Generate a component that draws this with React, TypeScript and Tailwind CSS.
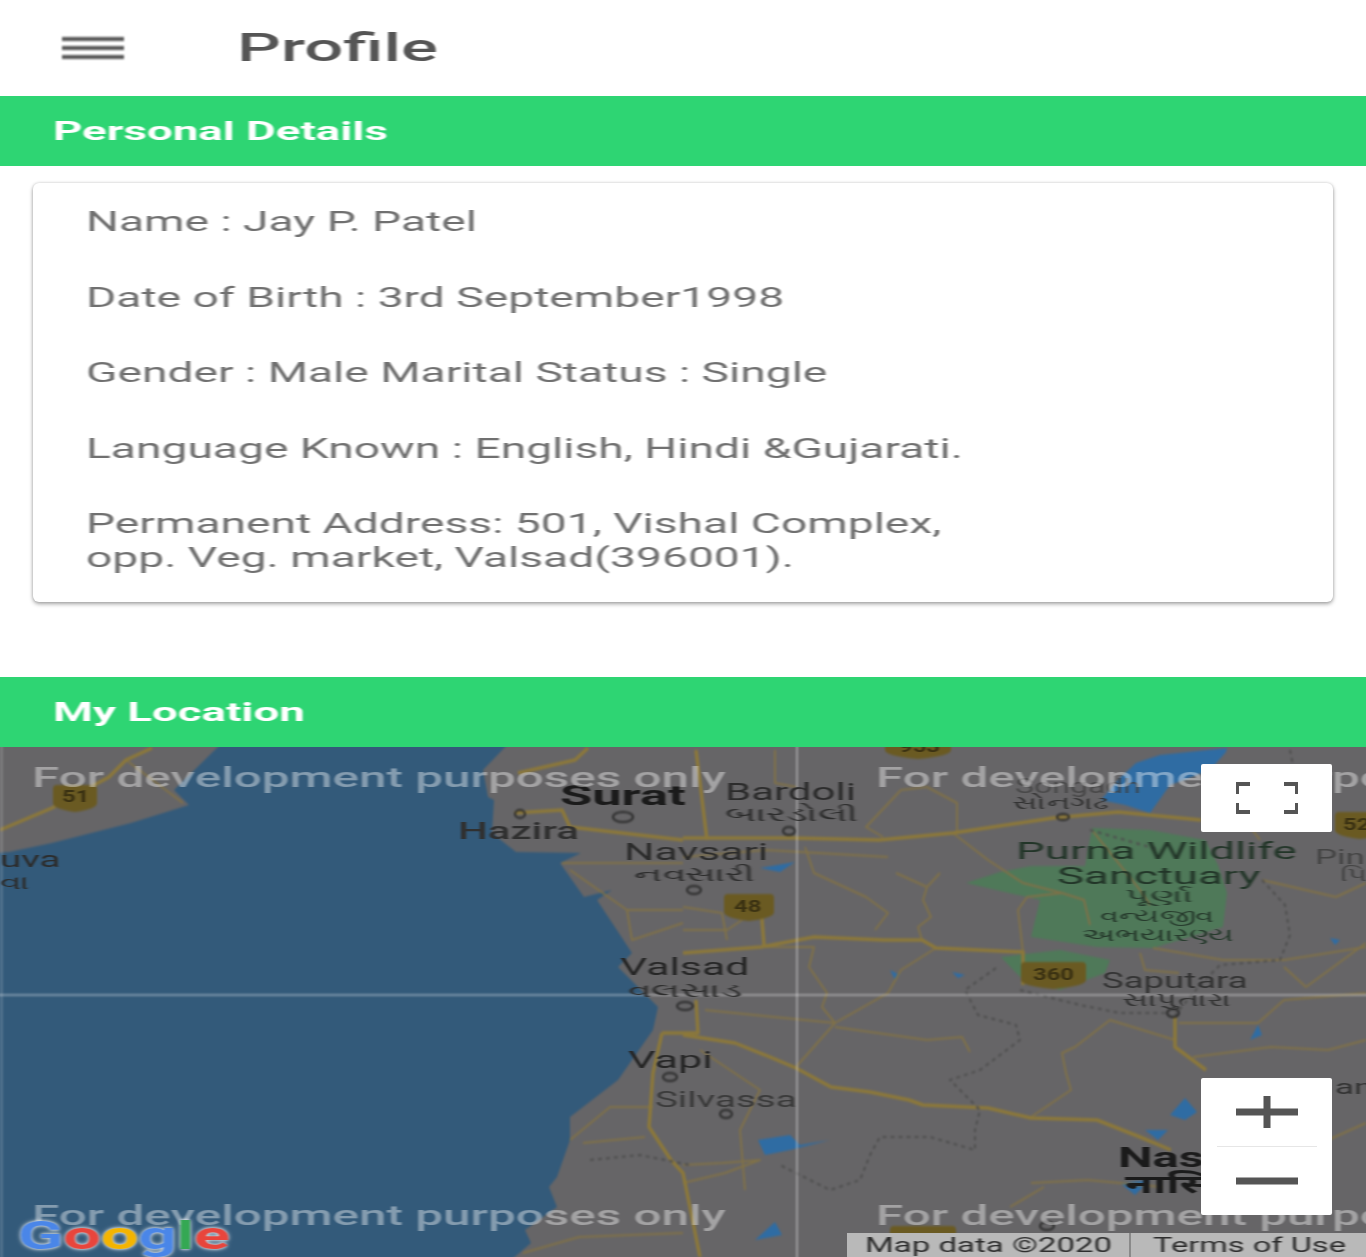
import React from 'react';

const roboto = "font-['Roboto','Noto_Sans',sans-serif]";

const labels: { text: string; className: string }[] = [
  { text: 'Songadh', className: 'left-[1015px] top-[29px] scale-x-[1.6] text-[20px] text-[#3d3d3d]/70' },
  { text: 'Surat', className: 'left-[560px] top-[35px] scale-x-[1.87] text-[28px] font-bold text-[#1b1b1b]' },
  { text: 'Hazira', className: 'left-[458px] top-[72px] scale-x-[1.75] text-[24px] font-medium text-[#303030]' },
  { text: 'Navsari', className: 'left-[624px] top-[93px] scale-x-[1.78] text-[24px] text-[#2c2c2c]' },
  { text: 'નવસારી', className: 'left-[634px] top-[117px] scale-x-[1.9] text-[20px] text-[#2c2c2c]' },
  { text: 'Bardoli', className: 'left-[725px] top-[33px] scale-x-[1.75] text-[24px] text-[#2c2c2c]' },
  { text: 'બારડોલી', className: 'left-[725px] top-[57px] scale-x-[1.97] text-[20px] text-[#2c2c2c]' },
  { text: 'Valsad', className: 'left-[620px] top-[208px] scale-x-[1.78] text-[24px] text-[#262626]' },
  { text: 'વલસાડ', className: 'left-[628px] top-[233px] scale-x-[1.93] text-[20px] text-[#2c2c2c]' },
  { text: 'Vapi', className: 'left-[628px] top-[301px] scale-x-[1.8] text-[24px] text-[#262626]' },
  { text: 'Silvassa', className: 'left-[655px] top-[342px] scale-x-[1.75] text-[22px] text-[#3a3a3a]' },
  { text: 'Purna Wildlife', className: 'left-[1016px] top-[92px] scale-x-[1.9] text-[24px] text-[#223528]' },
  { text: 'Sanctuary', className: 'left-[1057px] top-[117px] scale-x-[1.9] text-[24px] text-[#223528]' },
  { text: 'પૂર્ણા', className: 'left-[1125px] top-[140px] scale-x-[2.1] text-[18px] text-[#263a2c]' },
  { text: 'વન્યજીવ', className: 'left-[1100px] top-[160px] scale-x-[1.7] text-[18px] text-[#263a2c]' },
  { text: 'અભયારણ્ય', className: 'left-[1082px] top-[179px] scale-x-[1.75] text-[18px] text-[#263a2c]' },
  { text: 'Saputara', className: 'left-[1102px] top-[223px] scale-x-[1.66] text-[22px] text-[#333333]' },
  { text: 'સાપુતારા', className: 'left-[1122px] top-[244px] scale-x-[1.8] text-[18px] text-[#333333]' },
  { text: 'Nas', className: 'left-[1118px] top-[397px] scale-x-[1.75] text-[28px] font-bold text-[#1b1b1b]' },
  { text: 'नासि', className: 'left-[1125px] top-[424px] scale-x-[1.75] text-[26px] font-bold text-[#1b1b1b]' },
  { text: 'uva', className: 'left-[0px] top-[102px] scale-x-[1.75] text-[22px] text-[#2c2c2c]' },
  { text: 'વા', className: 'left-[0px] top-[125px] scale-x-[1.75] text-[20px] text-[#2c2c2c]' },
  { text: 'સોનગઢ', className: 'left-[1012px] top-[47px] scale-x-[1.75] text-[18px] text-[#333333]' },
  { text: 'Pin', className: 'left-[1315px] top-[100px] scale-x-[1.75] text-[20px] text-[#444444]' },
  { text: 'પિ', className: 'left-[1340px] top-[119px] scale-x-[1.75] text-[18px] text-[#444444]' },
  { text: 'an', className: 'left-[1335px] top-[330px] scale-x-[1.75] text-[20px] text-[#333333]' },
];

const shields: { x: number; y: number; w: number; label: string; className: string }[] = [
  { x: 53, y: 785, w: 44, label: '51', className: 'left-[62px] top-[41px]' },
  { x: 724, y: 894, w: 50, label: '48', className: 'left-[734px] top-[151px]' },
  { x: 1021, y: 962, w: 65, label: '360', className: 'left-[1033px] top-[219px]' },
  { x: 885, y: 732, w: 66, label: '953', className: 'left-[899px] top-[-9px]' },
  { x: 1335, y: 812, w: 50, label: '52', className: 'left-[1343px] top-[69px]' },
  { x: 890, y: 1226, w: 66, label: '', className: 'left-[899px] top-[484px]' },
];

const majorRoads = [
  'M683 1035 L735 1043 L770 1057 L796 1068 L831 1087 L870 1092 L909 1100 L923 1105 L988 1108 L1031 1118 L1097 1120 L1140 1137 L1171 1150',
  'M683 838 L792 838 L879 840 L953 833 L1053 818 L1118 812 L1201 820',
  'M683 953 L761 947 L814 937 L884 940 L922 940 L936 948 L1023 952 L1023 985',
  'M696 750 L707 840',
  'M696 1000 L698 1033 L662 1033',
  'M662 1033 L653 1073 L649 1127 L671 1160 L683 1173 L700 1257',
  'M761 907 L764 945',
  'M514 813 L562 810 L570 827 L683 840',
  'M0 830 L52 808 L109 777 L126 760 L152 748',
  'M1175 1017 L1175 1047 L1206 1070',
  'M518 773 L575 760 L588 748',
];

const minorRoads = [
  'M957 833 L957 803 L927 787 L901 790 L866 827 L883 837',
  'M953 833 L988 860 L1023 883 L1062 893 L1084 900 L1090 925',
  'M1023 952 L1018 910 L1027 897 L1062 893',
  'M922 940 L918 927 L931 917 L923 900 L927 887 L940 873',
  'M896 873 L927 887',
  'M805 847 L814 873 L866 897 L888 913 L875 930',
  'M766 947 L814 947 L809 967 L827 993 L822 1007 L835 1023',
  'M936 948 L901 970 L888 993 L835 1023 L796 1067',
  'M835 1027 L927 1040 L962 1037 L970 1052',
  'M705 1010 L835 1023',
  'M1175 1040 L1110 1020 L1075 1047 L1062 1053 L1066 1073 L1071 1090 L1031 1117',
  'M1179 1023 L1258 1023 L1284 1000 L1366 993',
  'M1193 1057 L1271 1047 L1328 1050 L1366 1040',
  'M1140 953 L1145 970 L1179 973',
  'M1262 880 L1336 897 L1366 883',
  'M1284 967 L1306 987 L1366 943',
  'M1153 948 L1223 960 L1284 960 L1366 947',
  'M1031 1183 L1088 1180 L1162 1187',
  'M1010 1207 L1044 1187',
  'M1328 1140 L1366 1123',
  'M775 750 L775 783 L796 787',
  'M683 857 L766 850 L888 857',
  'M683 930 L727 930 L757 910',
  'M727 940 L722 913 L683 907',
  'M562 863 L683 863',
  'M570 870 L627 910 L683 910',
  'M627 910 L632 940 L683 923',
  'M126 760 L183 803',
  'M570 1140 L610 1107 L653 1107',
  'M583 1143 L645 1137',
  'M523 1253 L579 1237 L683 1233',
  'M683 1165 L722 1163 L760 1160 L725 1173 L683 1183',
  'M1092 830 L1140 890 L1150 905',
  'M1230 800 L1260 840',
  'M700 1050 L760 1090 L740 1130 L745 1190',
];

const dashedRoads = [
  'M996 968 L965 990 L978 1015 L1016 1025 L1020 1040 L980 1070 L950 1080 L980 1110 L975 1130 L975 1140 L975 1150 L930 1137 L880 1137 L870 1155 L860 1180 L830 1190 L780 1165',
  'M1262 880 L1285 905 L1290 935 L1280 960 L1220 965 L1200 985 L1175 1015',
  'M1020 990 L1080 1005 L1120 1013 L1170 1013',
  'M590 1160 L640 1155 L690 1165',
  'M1090 830 L1160 850',
  'M1290 750 L1298 790',
];

const water = [
  'M1136 763 L1160 755 L1227 748 L1226 752 L1210 770 L1170 785 L1150 813 L1125 805 L1101 800 L1120 778 Z',
  'M758 1140 L790 1135 L800 1145 L830 1140 L790 1150 L765 1155 Z',
  'M1170 1115 L1185 1098 L1197 1112 L1185 1120 Z',
  'M1145 1130 L1168 1130 L1158 1140 Z',
  'M1120 1183 L1150 1180 L1135 1195 Z',
  'M755 1240 L775 1222 L782 1235 Z',
  'M1258 1025 L1262 1035 L1250 1040 Z',
  'M1330 938 L1340 940 L1335 945 Z',
  'M890 970 L900 975 L895 980 Z',
  'M952 972 L965 975 L958 978 Z',
  'M760 868 L795 862 L780 872 Z',
];

const towns = [
  [520, 814, 5, 4],
  [623, 817, 10, 5],
  [694, 890, 7, 4],
  [685, 1006, 8, 4],
  [670, 1077, 7, 4],
  [726, 1114, 6, 4],
  [1063, 817, 6, 3],
  [789, 831, 6, 4],
  [1173, 1013, 6, 4],
  [1047, 1226, 7, 4],
];

function MapSurface() {
  // drawn 4px past the map on every side so the blur doesn't fade at the edges
  return (
    <svg
      viewBox="-4 743 1374 518"
      className="absolute left-[-4px] top-[-4px] h-[518px] w-[1374px] max-w-none blur-[1px]"
      preserveAspectRatio="none"
    >
      <rect x="-4" y="743" width="1374" height="518" fill="#666567" />
      <path
        d="M-4 853 L9 852 L52 843 L131 823 L189 805 L174 790 L222 743 L509 743 L483 770 L488 797 L494 800 L492 833 L516 852 L581 853 L560 863 L584 897 L612 890 L597 900 L632 953 L618 967 L658 1007 L653 1030 L618 1080 L570 1117 L570 1140 L557 1177 L549 1187 L557 1207 L525 1230 L531 1243 L510 1261 L-4 1261 Z"
        fill="#335a7a"
      />
      <path
        d="M966 883 L1000 872 L1031 866 L1085 866 L1092 828 L1150 830 L1205 840 L1218 865 L1227 893 L1223 927 L1153 948 L1097 947 L1031 937 L1040 900 Z"
        fill="#4f7959"
      />
      <path d="M1001 957 L1060 950 L1110 960 L1105 973 L1060 990 L1023 980 Z" fill="#4f7959" />
      {water.map((d) => (
        <path key={d} d={d} fill="#2f6ca3" />
      ))}
      <g fill="none" strokeLinejoin="round">
        {minorRoads.map((d) => (
          <path key={d} d={d} stroke="#807148" strokeWidth="2" />
        ))}
        {majorRoads.map((d) => (
          <path key={d} d={d} stroke="#8c783a" strokeWidth="3.5" />
        ))}
        {dashedRoads.map((d) => (
          <path key={d} d={d} stroke="#4e4e4e" strokeWidth="2" strokeDasharray="4 4" />
        ))}
        {towns.map(([cx, cy, rx, ry]) => (
          <ellipse key={`${cx}-${cy}`} cx={cx} cy={cy} rx={rx} ry={ry} stroke="#2a2a2a" strokeWidth="2" />
        ))}
      </g>
      {shields.map((s) => (
        <path
          key={s.x}
          d={`M${s.x + 4} ${s.y} h${s.w - 8} q4 0 4 4 v14 q0 6 -${s.w / 2} 9 q-${s.w / 2} -3 -${s.w / 2} -9 v-14 q0 -4 4 -4 Z`}
          fill="#6a5a22"
        />
      ))}
      <path d="M797 743 V1261" stroke="#ffffff" strokeOpacity="0.35" strokeWidth="2" />
      <path d="M-4 995 H1370" stroke="#ffffff" strokeOpacity="0.35" strokeWidth="2" />
      <path d="M1.5 743 V1261" stroke="#ffffff" strokeOpacity="0.15" strokeWidth="3" />
    </svg>
  );
}

function Watermark({ className }: { className: string }) {
  return (
    <span
      className={`absolute origin-left scale-x-[1.83] whitespace-nowrap text-[27px] font-medium leading-none text-white/40 blur-[0.7px] ${className}`}
    >
      For development purposes only
    </span>
  );
}

function GoogleLogo() {
  return (
    <div className="absolute bottom-[2px] left-[18px] origin-left scale-x-[1.75] whitespace-nowrap text-[38px] font-bold leading-none blur-[0.7px] [text-shadow:0_0_2px_rgba(255,255,255,0.9),0_0_4px_rgba(255,255,255,0.7)]">
      <span className="text-[#4a86e8]">G</span>
      <span className="text-[#e8453c]">o</span>
      <span className="text-[#f4b400]">o</span>
      <span className="text-[#4a86e8]">g</span>
      <span className="text-[#34a853]">l</span>
      <span className="text-[#e8453c]">e</span>
    </div>
  );
}

export default function App() {
  return (
    <div className={`flex h-[1257px] w-full flex-col overflow-hidden bg-white ${roboto}`}>
      <header className="flex h-24 shrink-0 items-center pl-[62px]">
        <div className="flex w-[62px] flex-col gap-[5px] blur-[1px]">
          <span className="h-1 bg-[#555555]" />
          <span className="h-1 bg-[#555555]" />
          <span className="h-1 bg-[#555555]" />
        </div>
        <h1 className="ml-[113px] origin-left scale-x-[1.81] text-[38px] font-medium leading-none text-[#555555] blur-[0.7px]">
          Profile
        </h1>
      </header>

      <div className="flex h-[70px] shrink-0 items-center bg-[#2ed573] pl-[53px]">
        <h2 className="origin-left scale-x-[1.755] text-[26px] font-bold leading-none text-white blur-[0.7px]">
          Personal Details
        </h2>
      </div>

      <div className="mx-[33px] mt-[17px] h-[419px] shrink-0 rounded-[6px] bg-white px-[53px] pt-[22px] text-[27px] leading-[34px] text-[#707070] shadow-[0_2px_4px_rgba(0,0,0,0.35),0_0_3px_rgba(0,0,0,0.15)]">
        <div className="flex origin-left scale-x-[1.71] flex-col gap-[41.5px] whitespace-nowrap blur-[0.7px]">
          <p>Name : Jay P. Patel</p>
          <p>Date of Birth : 3rd September1998</p>
          <p>Gender : Male Marital Status : Single</p>
          <p>Language Known : English, Hindi &amp;Gujarati.</p>
          <p>
            Permanent Address: 501, Vishal Complex,
            <br />
            opp. Veg. market, Valsad(396001).
          </p>
        </div>
      </div>

      <div className="mt-[75px] flex h-[70px] shrink-0 items-center bg-[#2ed573] pl-[53px]">
        <h2 className="origin-left scale-x-[1.755] text-[26px] font-bold leading-none text-white blur-[0.7px]">
          My Location
        </h2>
      </div>

      <div className="relative flex-1 overflow-hidden">
        <MapSurface />
        {shields.map((s) =>
          s.label ? (
            <span
              key={s.x}
              className={`absolute origin-left scale-x-[1.4] text-[17px] font-bold leading-none text-[#3a3112] blur-[0.7px] ${s.className}`}
            >
              {s.label}
            </span>
          ) : null,
        )}
        {labels.map((l) => (
          <span key={l.text} className={`absolute origin-left whitespace-nowrap leading-none blur-[0.7px] ${l.className}`}>
            {l.text}
          </span>
        ))}
        <Watermark className="left-[32px] top-[18px]" />
        <Watermark className="left-[876px] top-[18px]" />
        <Watermark className="left-[32px] top-[456px]" />
        <Watermark className="left-[876px] top-[456px]" />

        <GoogleLogo />

        <div className="absolute left-[1201px] top-[17px] flex h-[68px] w-[131px] items-center justify-center rounded-[2px] bg-white">
          <svg className="blur-[0.7px]" width="62" height="32" viewBox="0 0 62 32" fill="none" stroke="#555555" strokeWidth="4">
            <path d="M1 12V2H14M48 2H61V12M61 21V30H48M14 30H1V21" />
          </svg>
        </div>

        <div className="absolute left-[1201px] top-[331px] flex h-[137px] w-[131px] flex-col items-center rounded-[2px] bg-white">
          <div className="flex h-[68px] items-center">
            <svg className="blur-[0.7px]" width="62" height="32" viewBox="0 0 62 32" fill="none" stroke="#555555" strokeWidth="7">
              <path d="M0 16H62M31 0V32" />
            </svg>
          </div>
          <div className="h-px w-[100px] bg-[#e6e6e6]" />
          <div className="flex flex-1 items-center">
            <svg className="blur-[0.7px]" width="62" height="8" viewBox="0 0 62 8" fill="none" stroke="#555555" strokeWidth="7">
              <path d="M0 4H62" />
            </svg>
          </div>
        </div>

        <div className="absolute bottom-0 right-0 flex h-6 w-[519px] items-center bg-[#b9b9b9] text-[20px] leading-none text-[#2e2e2e]">
          <div className="flex h-full w-[284px] items-center border-r-2 border-[#8a8a8a] pl-[18px]">
            <span className="origin-left scale-x-[1.65] whitespace-nowrap blur-[0.7px]">Map data ©2020</span>
          </div>
          <span className="ml-[22px] origin-left scale-x-[1.63] whitespace-nowrap blur-[0.7px]">Terms of Use</span>
        </div>
      </div>
    </div>
  );
}
